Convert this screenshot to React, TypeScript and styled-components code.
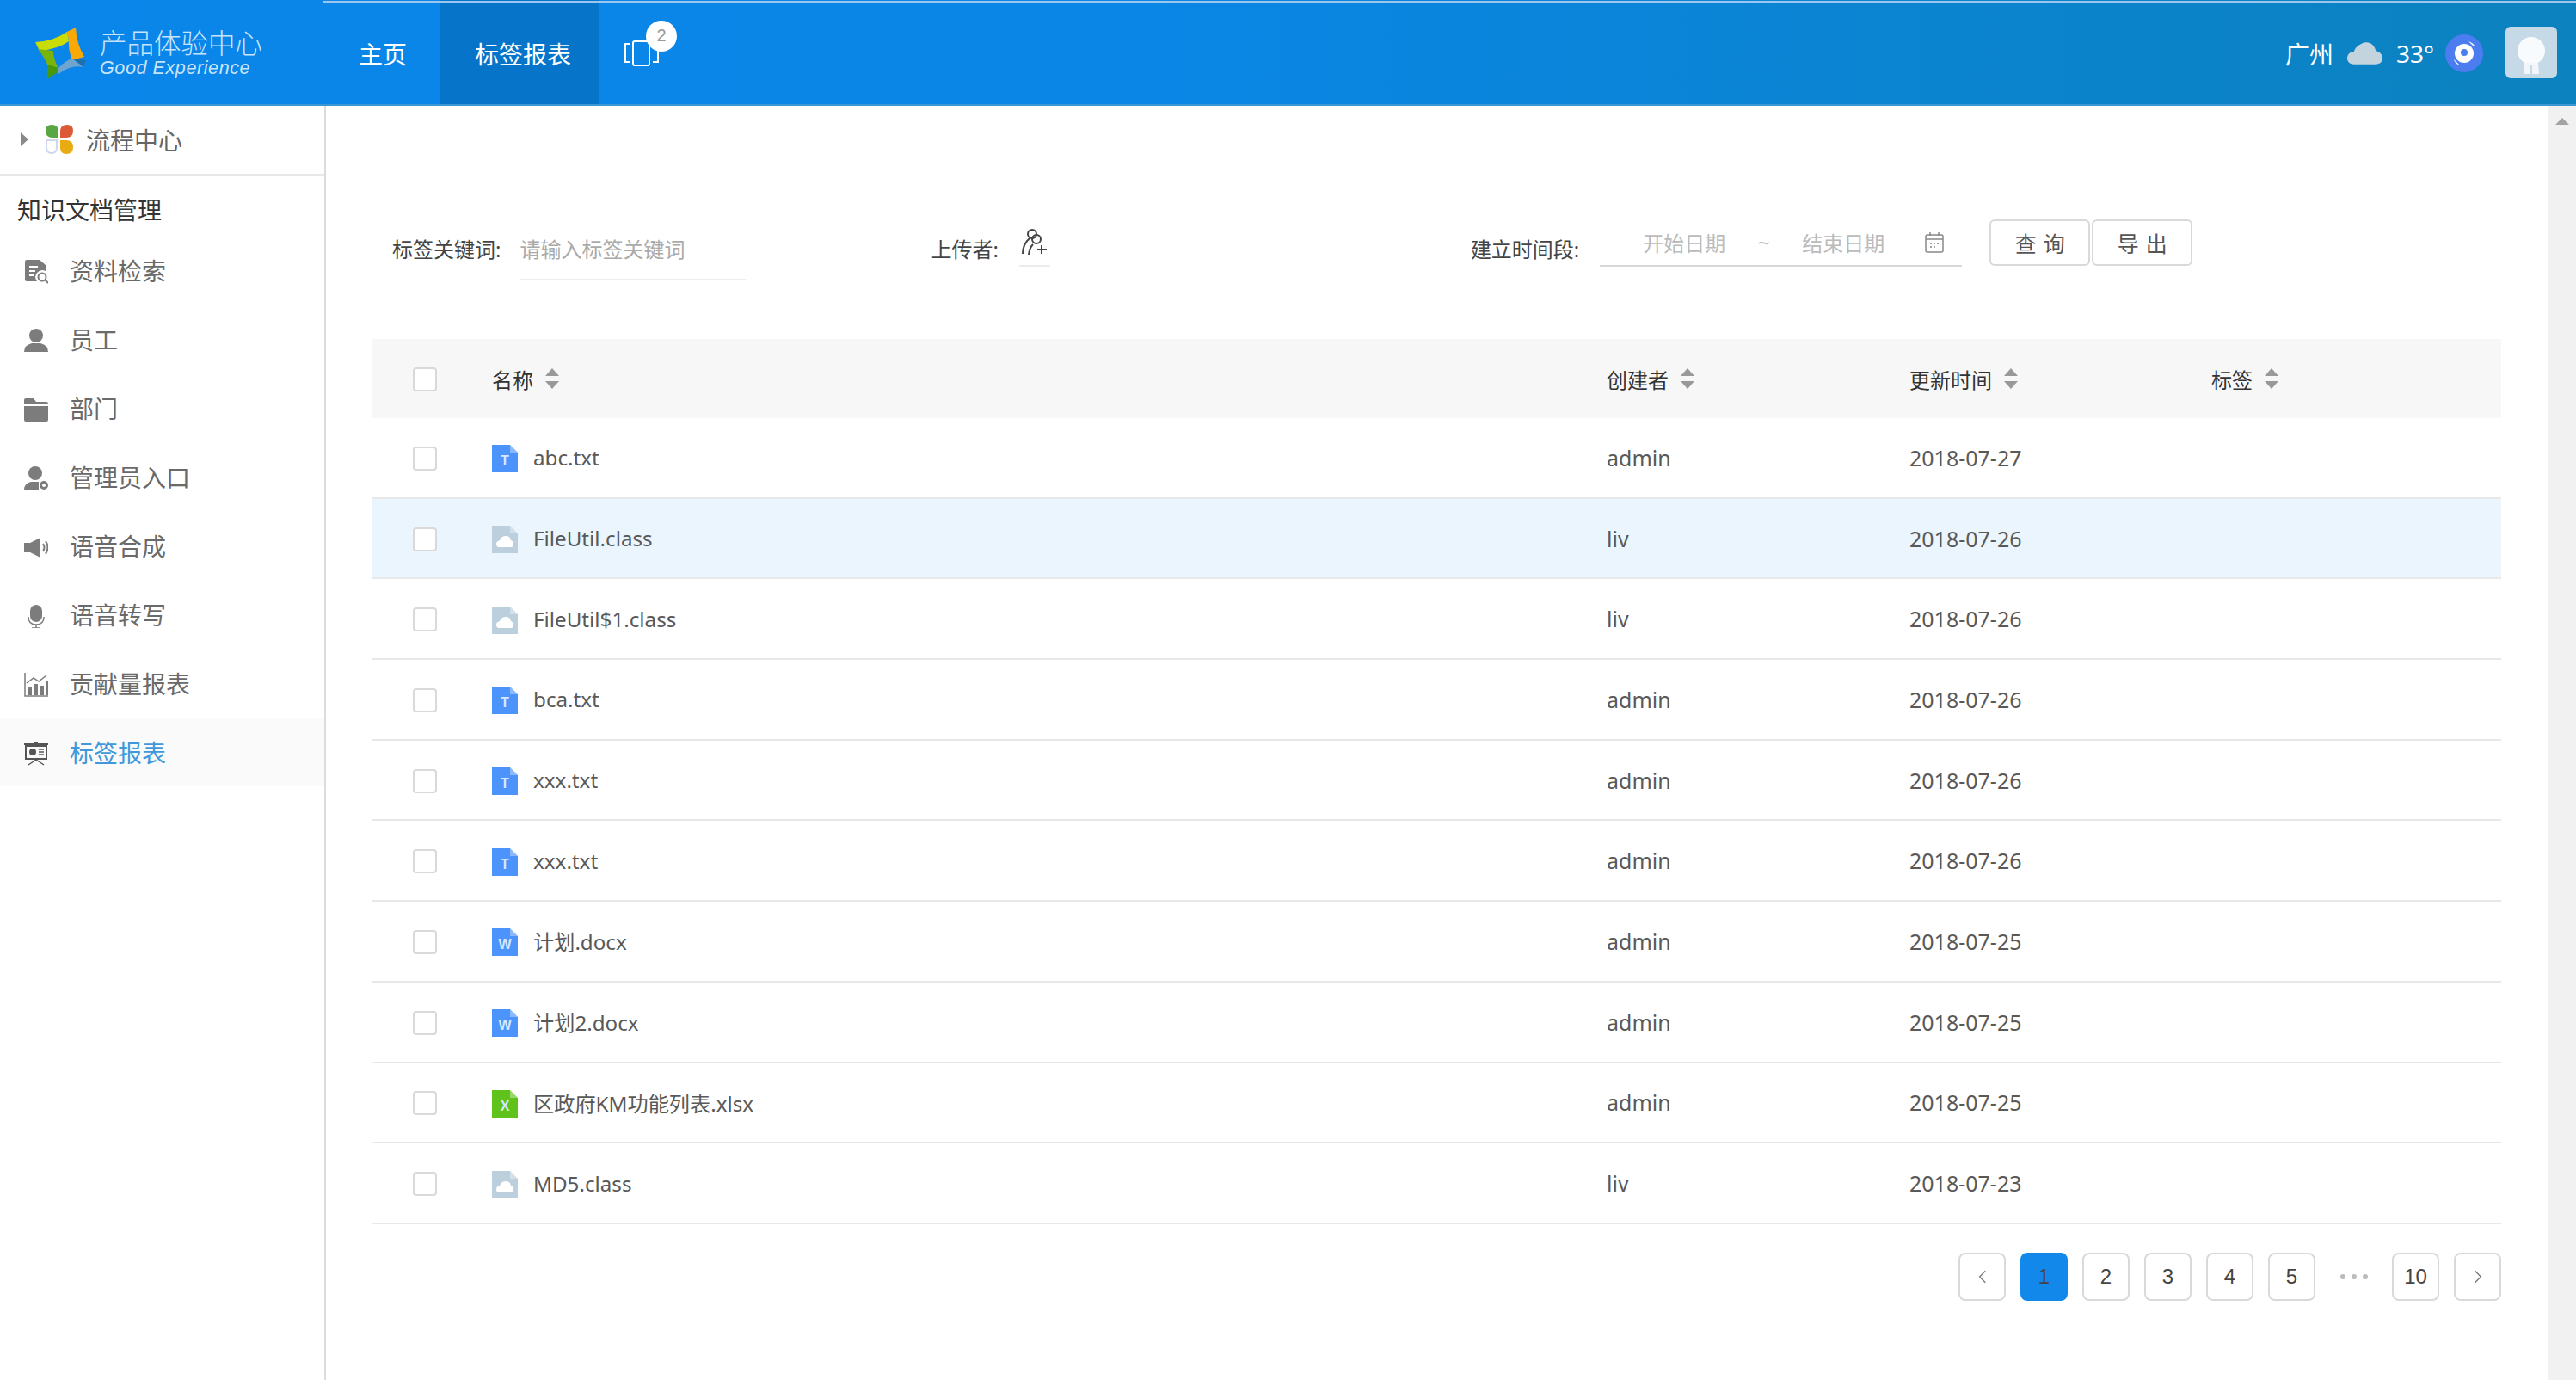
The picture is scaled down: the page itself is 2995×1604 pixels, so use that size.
import React from "react";
import styled, { createGlobalStyle } from "styled-components";

const CJK = `"Noto Sans", "Noto Sans CJK SC", sans-serif`;

const GlobalStyle = createGlobalStyle`
  html, body {
    margin: 0;
    padding: 0;
    overflow: hidden;
    background: #fff;
    font-family: ${CJK};
  }
  * { box-sizing: border-box; }
`;

type FileKind = "txt" | "class" | "doc" | "xls";

const files: { name: string; kind: FileKind; owner: string; date: string; active?: boolean }[] = [
  { name: "abc.txt", kind: "txt", owner: "admin", date: "2018-07-27" },
  { name: "FileUtil.class", kind: "class", owner: "liv", date: "2018-07-26", active: true },
  { name: "FileUtil$1.class", kind: "class", owner: "liv", date: "2018-07-26" },
  { name: "bca.txt", kind: "txt", owner: "admin", date: "2018-07-26" },
  { name: "xxx.txt", kind: "txt", owner: "admin", date: "2018-07-26" },
  { name: "xxx.txt", kind: "txt", owner: "admin", date: "2018-07-26" },
  { name: "计划.docx", kind: "doc", owner: "admin", date: "2018-07-25" },
  { name: "计划2.docx", kind: "doc", owner: "admin", date: "2018-07-25" },
  { name: "区政府KM功能列表.xlsx", kind: "xls", owner: "admin", date: "2018-07-25" },
  { name: "MD5.class", kind: "class", owner: "liv", date: "2018-07-23" },
];

function LogoMark() {
  return (
    <svg width="68" height="68" viewBox="38 28 68 68">
      <path d="M41 50 Q62 49 78 38 L80 49 Q68 58 46 60 Z" fill="#c9dc05" />
      <path d="M78 38 L88 33 Q89 52 98 67 L84 71 Q79 58 80 48 Z" fill="#f9a805" />
      <path d="M84 69 L100 71 L97 79 Z" fill="#1f6fae" />
      <path d="M68 80 Q75 72 84 69 L97 79 Q82 76 68 87 Z" fill="#6fa4cf" />
      <path d="M44 58 L62 60 Q62 70 68 80 L56 78 Q52 68 44 58 Z" fill="#7bb408" />
      <path d="M56 76 L68 80 L67 85 L55 93 Q54 84 56 76 Z" fill="#46990f" />
    </svg>
  );
}

function DevicesIcon() {
  return (
    <svg width="42" height="30" viewBox="0 0 42 30" fill="none" stroke="#fff" strokeWidth="2">
      <rect x="11" y="1" width="19" height="28" rx="2" />
      <path d="M7 4 H2 V25 H7" />
      <path d="M34 6 H40 V25 H34" />
    </svg>
  );
}

function Cloud() {
  return (
    <svg width="41" height="27" viewBox="0 0 42 27">
      <path
        d="M8 27 C2 27 0 23 0 20 C0 15 4 12 8 12 C10 6 15 3 21 1 C28 0 33 5 34 11 C39 12 42 16 42 20 C42 24 39 27 34 27 Z"
        fill="#c3d4df"
      />
    </svg>
  );
}

function StormBadge() {
  return (
    <svg width="44" height="44" viewBox="0 0 44 44">
      <circle cx="22" cy="22" r="22" fill="#4b7cf0" />
      <circle cx="22" cy="22" r="11" fill="#fff" />
      <circle cx="22" cy="21" r="4" fill="#4b7cf0" />
      <path d="M27 8 Q33 10 35 15 L31 12 Z M17 36 Q11 34 10 29 L13 32 Z" fill="#fff" />
    </svg>
  );
}

function AvatarFigure() {
  return (
    <svg width="60" height="60" viewBox="0 0 60 60">
      <rect width="60" height="60" rx="6" fill="#c6d9e6" />
      <circle cx="30" cy="28" r="16" fill="#f8fbfe" />
      <path d="M22 42 H29 V55 H21 Z M31 42 H38 L39 55 H31 Z" fill="#f2f6fa" />
    </svg>
  );
}

function Petals() {
  return (
    <svg width="33" height="34" viewBox="0 0 33 34">
      <path d="M8 0 Q16 0 16 8 V15 H9 Q1 15 1 7 Q1 0 8 0 Z" fill="#5aa544" />
      <path d="M18 15 V8 Q18 0 26 0 Q33 0 33 7 Q33 15 25 15 Z" fill="#dd5a36" />
      <path d="M2 18 H14 V26 Q14 33 8 33 Q2 33 2 26 Z" fill="#fff" stroke="#cfd6ee" strokeWidth="2" />
      <path d="M18 18 H25 Q33 18 33 26 Q33 34 25 34 Q18 34 18 27 Z" fill="#e9ab12" />
    </svg>
  );
}

const navIcons: Record<string, React.ReactNode> = {
  search: (
    <>
      <path d="M3 0 H18 L25 6 V13 A8 8 0 0 0 15 25 H3 Q1 25 1 23 V2 Q1 0 3 0Z" />
      <path d="M6 8 H16 M6 13 H13 M6 18 H12" stroke="#fff" strokeWidth="2" />
      <circle cx="21" cy="20" r="4.5" fill="none" stroke="#7c7c7c" strokeWidth="2" />
      <path d="M24 23 L28 27" stroke="#7c7c7c" strokeWidth="2" />
    </>
  ),
  person: (
    <>
      <circle cx="14" cy="8" r="8" />
      <path d="M0 27 Q0 19 9 17 H19 Q28 19 28 27 Z" />
    </>
  ),
  folder: <path d="M0 3 Q0 1 2 1 H11 L14 5 H26 Q28 5 28 7 V8 H0 Z M0 10 H28 V26 Q28 28 26 28 H2 Q0 28 0 26 Z" />,
  admin: (
    <>
      <circle cx="13" cy="8" r="8" />
      <path d="M0 27 Q0 20 8 18 H17 V27 Z" />
      <circle cx="23" cy="22" r="3.5" fill="none" stroke="#7c7c7c" strokeWidth="3" />
    </>
  ),
  speaker: (
    <>
      <path d="M0 9 H7 L19 3 V26 L7 20 H0 Z" />
      <path d="M22 10 Q25 14 22 19 M25 7 Q30 14 25 22" fill="none" stroke="#7c7c7c" strokeWidth="2" />
    </>
  ),
  mic: (
    <>
      <rect x="7" y="1" width="14" height="20" rx="7" />
      <path d="M5 15 Q5 24 14 24 Q23 24 23 15 M14 24 V28 M9 28 H19" fill="none" stroke="#7c7c7c" strokeWidth="1.5" />
    </>
  ),
  chart: (
    <>
      <path d="M1 0 V27 H28" fill="none" stroke="#7c7c7c" strokeWidth="1.5" />
      <path d="M5 16 H9 V26 H5 Z M12 13 H16 V26 H12 Z M19 15 H23 V26 H19 Z M25 10 H28 V26 H25 Z" />
      <path d="M3 12 L11 6 L17 10 L26 3" fill="none" stroke="#7c7c7c" strokeWidth="1.5" />
    </>
  ),
  board: (
    <>
      <path d="M12 0 H16 V2 H28 V4 H0 V2 H12 Z" />
      <path d="M2 5 H26 V20 H2 Z" fill="none" stroke="#555" strokeWidth="2" />
      <circle cx="10" cy="12" r="4" fill="#555" />
      <path d="M17 9 H23 M17 12 H23 M17 15 H23 M14 21 L5 27 M14 21 L23 27" fill="none" stroke="#555" strokeWidth="1.5" />
    </>
  ),
};

const menu = [
  { key: "search", label: "资料检索" },
  { key: "person", label: "员工" },
  { key: "folder", label: "部门" },
  { key: "admin", label: "管理员入口" },
  { key: "speaker", label: "语音合成" },
  { key: "mic", label: "语音转写" },
  { key: "chart", label: "贡献量报表" },
  { key: "board", label: "标签报表", active: true },
];

function FileIcon({ kind }: { kind: FileKind }) {
  const fill = kind === "xls" ? "#5fc31c" : kind === "class" ? "#bccfdd" : "#4c94fb";
  const letter = kind === "txt" ? "T" : kind === "doc" ? "W" : kind === "xls" ? "X" : "";
  return (
    <svg width="30" height="32" viewBox="0 0 30 32">
      <path d="M0 0 H21 L30 9 V32 H0 Z" fill={fill} />
      <path d="M21 0 L30 9 H21 Z" fill="#fff" opacity="0.35" />
      {kind === "class" ? (
        <path d="M8 25 Q5 25 5 21 Q5 18 9 17 Q11 12 16 12 Q21 12 22 17 Q25 18 25 21 Q25 25 22 25 Z" fill="#fff" />
      ) : (
        <text x="15" y="24" textAnchor="middle" fontSize="16" fontWeight="700" fill="#d6e8ff" fontFamily="Liberation Sans, sans-serif">
          {letter}
        </text>
      )}
    </svg>
  );
}

function CalendarIcon() {
  return (
    <svg width="22" height="24" viewBox="0 0 22 24" fill="none" stroke="#888" strokeWidth="1.5">
      <rect x="1" y="3" width="20" height="20" rx="2" />
      <path d="M1 8 H21 M6 0 V4 M16 0 V4" />
      <path d="M6 13 H8 M10 13 H12 M14 13 H16 M6 17 H8 M10 17 H12" />
    </svg>
  );
}

function UploaderIcon() {
  return (
    <svg width="32" height="32" viewBox="0 0 32 32" fill="none" stroke="#444" strokeWidth="2">
      <circle cx="13" cy="6" r="5" />
      <circle cx="18" cy="12" r="5" />
      <path d="M10 11 Q2 18 2 29 M9 30 Q10 22 14 18" />
      <path d="M24 19 V29 M19 24 H30" />
    </svg>
  );
}

export default function App() {
  return (
    <Page>
      <GlobalStyle />
      <TopBar>
        <Brand>
          <LogoMark />
          <BrandText>
            <BrandName>产品体验中心</BrandName>
            <BrandSub>Good Experience</BrandSub>
          </BrandText>
        </Brand>
        <NavTab>主页</NavTab>
        <NavTab $active>标签报表</NavTab>
        <DeviceButton>
          <DevicesIcon />
          <Badge>2</Badge>
        </DeviceButton>
        <Weather>
          <span>广州</span>
          <Cloud />
          <span>33°</span>
          <StormBadge />
        </Weather>
        <Avatar>
          <AvatarFigure />
        </Avatar>
      </TopBar>

      <Body>
        <Sidebar>
          <FlowRow>
            <Caret />
            <Petals />
            <span>流程中心</span>
          </FlowRow>
          <GroupTitle>知识文档管理</GroupTitle>
          {menu.map((m) => (
            <MenuItem key={m.key} $active={m.active}>
              <svg width="28" height="28" viewBox="0 0 28 28" fill={m.active ? "#555" : "#7c7c7c"}>
                {navIcons[m.key]}
              </svg>
              <span>{m.label}</span>
            </MenuItem>
          ))}
        </Sidebar>

        <Main>
          <FilterBar>
            <FieldLabel>标签关键词:</FieldLabel>
            <KeywordInput>请输入标签关键词</KeywordInput>
            <FieldLabel $left={215} $gap={24}>上传者:</FieldLabel>
            <UploaderPick>
              <UploaderIcon />
            </UploaderPick>
            <FieldLabel $left={489} $gap={24}>建立时间段:</FieldLabel>
            <DateRange>
              <DateText>开始日期</DateText>
              <Tilde>~</Tilde>
              <DateText>结束日期</DateText>
              <CalendarSlot>
                <CalendarIcon />
              </CalendarSlot>
            </DateRange>
            <ActionButton $first>查询</ActionButton>
            <ActionButton>导出</ActionButton>
          </FilterBar>

          <Table>
            <HeadRow>
              <CheckCell>
                <Check />
              </CheckCell>
              <HeadCell>
                名称
                <Sort />
              </HeadCell>
              <HeadCell>
                创建者
                <Sort />
              </HeadCell>
              <HeadCell>
                更新时间
                <Sort />
              </HeadCell>
              <HeadCell>
                标签
                <Sort />
              </HeadCell>
            </HeadRow>
            {files.map((f, i) => (
              <DataRow key={i} $active={f.active}>
                <CheckCell>
                  <Check />
                </CheckCell>
                <NameCell>
                  <FileIcon kind={f.kind} />
                  <span>{f.name}</span>
                </NameCell>
                <span>{f.owner}</span>
                <span>{f.date}</span>
                <span />
              </DataRow>
            ))}
          </Table>

          <Pager>
            <PageBtn>
              <Chevron viewBox="0 0 12 20">
                <path d="M10 2 L2 10 L10 18" />
              </Chevron>
            </PageBtn>
            <PageBtn $active>1</PageBtn>
            <PageBtn>2</PageBtn>
            <PageBtn>3</PageBtn>
            <PageBtn>4</PageBtn>
            <PageBtn>5</PageBtn>
            <PageDots>
              <i />
              <i />
              <i />
            </PageDots>
            <PageBtn>10</PageBtn>
            <PageBtn>
              <Chevron viewBox="0 0 12 20">
                <path d="M2 2 L10 10 L2 18" />
              </Chevron>
            </PageBtn>
          </Pager>
        </Main>

        <ScrollTrack>
          <ScrollArrow />
        </ScrollTrack>
      </Body>
    </Page>
  );
}

const Page = styled.div`
  width: 2995px;
  height: 1604px;
  display: flex;
  flex-direction: column;
  overflow: hidden;
`;

const TopBar = styled.header`
  height: 123px;
  flex: none;
  display: flex;
  align-items: center;
  padding-right: 22px;
  color: #fff;
  background: linear-gradient(90deg, #0a86ea 0%, #0a86e6 45%, #0c82be 100%);
  border-bottom: 2px solid #3c97d0;
  position: relative;

  &::before {
    content: "";
    position: absolute;
    left: 376px;
    right: 0;
    top: 1px;
    height: 2px;
    background: #9cc6ee;
  }
`;

const Brand = styled.div`
  width: 376px;
  padding-left: 38px;
  display: flex;
  align-items: center;
  gap: 10px;
`;

const BrandText = styled.div`
  display: flex;
  flex-direction: column;
  color: #c8e4fb;
  padding-top: 2px;
`;

const BrandName = styled.div`
  font-size: 31.5px;
  line-height: 34px;
  white-space: nowrap;
  font-weight: 300;
`;

const BrandSub = styled.div`
  font-size: 21.5px;
  line-height: 24px;
  font-style: italic;
  font-family: "Liberation Sans", sans-serif;
  white-space: nowrap;
  letter-spacing: 0.6px;
`;

const NavTab = styled.div<{ $active?: boolean }>`
  height: 100%;
  display: flex;
  align-items: center;
  justify-content: center;
  font-size: 28px;
  padding: 3px 0 0 ${(p) => (p.$active ? "8px" : "2px")};
  width: ${(p) => (p.$active ? "184px" : "136px")};
  background: ${(p) => (p.$active ? "#0674c9" : "transparent")};
`;

const DeviceButton = styled.div`
  margin-left: 29px;
  position: relative;
  display: flex;
  margin-top: 2px;
`;

const Badge = styled.div`
  position: absolute;
  left: 26px;
  top: -23px;
  width: 36px;
  height: 36px;
  border-radius: 50%;
  background: #fff;
  color: #999;
  font-size: 20px;
  font-family: "Liberation Sans", sans-serif;
  display: flex;
  align-items: center;
  justify-content: center;
`;

const Weather = styled.div`
  margin-left: auto;
  display: flex;
  align-items: center;
  gap: 16px;
  font-size: 28px;
  white-space: nowrap;
  margin-top: 2px;

  & > span:nth-of-type(2) {
    margin-right: -3px;
  }
`;

const Avatar = styled.div`
  margin-left: 26px;
  display: flex;
  width: 60px;
  height: 60px;
`;

const Body = styled.div`
  flex: 1;
  display: flex;
  min-height: 0;
`;

const Sidebar = styled.aside`
  width: 379px;
  flex: none;
  border-right: 2px solid #dcdcdc;
  background: #fff;
`;

const FlowRow = styled.div`
  height: 81px;
  display: flex;
  align-items: center;
  padding: 0 0 2px 24px;
  border-bottom: 2px solid #e8e8e8;
  color: #666;
  font-size: 28px;
  gap: 15px;
`;

const Caret = styled.div`
  width: 0;
  height: 0;
  border-style: solid;
  border-width: 8px 0 8px 9px;
  border-color: transparent transparent transparent #8a8a8a;
  margin-right: 4px;
`;

const GroupTitle = styled.div`
  height: 70px;
  display: flex;
  align-items: flex-end;
  padding-left: 20px;
  padding-bottom: 11px;
  color: #333;
  font-size: 28px;
`;

const MenuItem = styled.div<{ $active?: boolean }>`
  height: 80px;
  display: flex;
  align-items: center;
  padding-left: 28px;
  gap: 25px;
  font-size: 28px;
  color: ${(p) => (p.$active ? "#3f98d9" : "#6a6a6a")};
  background: ${(p) => (p.$active ? "#fafafa" : "transparent")};

  svg {
    margin-top: 4px;
  }
`;

const Main = styled.main`
  flex: 1;
  min-width: 0;
  padding: 132px 54px 0 53px;
  background: #fff;
`;

const FilterBar = styled.div`
  display: flex;
  align-items: flex-start;
  height: 54px;
  padding-left: 24px;
`;

const FieldLabel = styled.label<{ $left?: number; $gap?: number }>`
  line-height: 70px;
  font-size: 24px;
  color: #444;
  white-space: nowrap;
  margin-left: ${(p) => p.$left ?? 0}px;
  margin-right: ${(p) => p.$gap ?? 22}px;
`;

const KeywordInput = styled.div`
  width: 263px;
  height: 71px;
  line-height: 70px;
  font-size: 24px;
  color: #aaa;
  border-bottom: 2px solid #ececec;
`;

const UploaderPick = styled.div`
  width: 36px;
  height: 55px;
  padding: 11px 2px 0;
  border-bottom: 2px solid #ececec;
`;

const DateRange = styled.div`
  width: 421px;
  height: 55px;
  display: flex;
  align-items: center;
  padding-left: 50px;
  border-bottom: 2px solid #d8d8d8;
  color: #bbb;
  font-size: 24px;
  margin-right: 32px;
`;

const DateText = styled.span`
  white-space: nowrap;
`;

const Tilde = styled.span`
  width: 89px;
  text-align: center;
`;

const CalendarSlot = styled.span`
  margin-left: 47px;
  display: flex;
`;

const ActionButton = styled.button<{ $first?: boolean }>`
  width: 117px;
  height: 54px;
  margin-right: ${(p) => (p.$first ? "2px" : "0")};
  padding: 0 0 0 8px;
  background: #fff;
  border: 2px solid #d9d9d9;
  border-radius: 6px;
  font-family: ${CJK};
  font-size: 25px;
  letter-spacing: 8px;
  color: #555;
`;

const Table = styled.div`
  margin-top: 85px;
  font-size: 25px;
  color: #595959;
`;

const columns = "140px 1296px 352px 351px 1fr";

const HeadRow = styled.div`
  display: grid;
  grid-template-columns: ${columns};
  align-items: center;
  height: 92px;
  background: #f7f7f7;
  font-size: 24px;
  color: #333;
`;

const DataRow = styled.div<{ $active?: boolean }>`
  display: grid;
  grid-template-columns: ${columns};
  align-items: center;
  height: 93.7px;
  border-bottom: 2px solid #e8e8e8;
  background: ${(p) => (p.$active ? "#eaf5fd" : "#fff")};
`;

const CheckCell = styled.div`
  padding: 2px 0 0 48px;
  display: flex;
`;

const Check = styled.div`
  width: 28px;
  height: 28px;
  background: #fff;
  border: 2px solid #d9d9d9;
  border-radius: 4px;
`;

const HeadCell = styled.div`
  display: flex;
  align-items: center;
`;

const Sort = styled.i`
  display: block;
  margin-left: 14px;
  width: 16px;
  height: 24px;
  position: relative;

  &::before,
  &::after {
    content: "";
    position: absolute;
    left: 0;
    border-style: solid;
    border-color: transparent;
  }
  &::before {
    top: 0;
    border-width: 0 8px 9px 8px;
    border-bottom-color: #999;
  }
  &::after {
    bottom: 0;
    border-width: 9px 8px 0 8px;
    border-top-color: #999;
  }
`;

const NameCell = styled.div`
  display: flex;
  align-items: center;
  gap: 18px;
  white-space: nowrap;
  font-size: 24.2px;

  svg {
    margin-top: 3px;
  }
`;

const Pager = styled.nav`
  margin-top: 33px;
  display: flex;
  justify-content: flex-end;
  gap: 17px;
`;

const PageBtn = styled.div<{ $active?: boolean }>`
  width: 55px;
  height: 56px;
  display: flex;
  align-items: center;
  justify-content: center;
  border-radius: 8px;
  font-family: "Liberation Sans", sans-serif;
  font-size: 24px;
  color: #444;
  border: 2px solid ${(p) => (p.$active ? "#1289ea" : "#d9d9d9")};
  background: ${(p) => (p.$active ? "#1289ea" : "#fff")};
`;

const Chevron = styled.svg`
  width: 10px;
  height: 18px;
  fill: none;
  stroke: #777;
  stroke-width: 1.6;
`;

const PageDots = styled.div`
  width: 55px;
  display: flex;
  align-items: center;
  justify-content: center;
  gap: 7px;

  i {
    display: block;
    width: 6px;
    height: 6px;
    border-radius: 50%;
    background: #bbb;
  }
`;

const ScrollTrack = styled.div`
  width: 33px;
  flex: none;
  background: #f1f1f1;
  display: flex;
  justify-content: center;
  padding-top: 14px;
`;

const ScrollArrow = styled.div`
  width: 0;
  height: 0;
  border-style: solid;
  border-width: 0 8px 8px 8px;
  border-color: transparent transparent #a3a3a3 transparent;
`;
